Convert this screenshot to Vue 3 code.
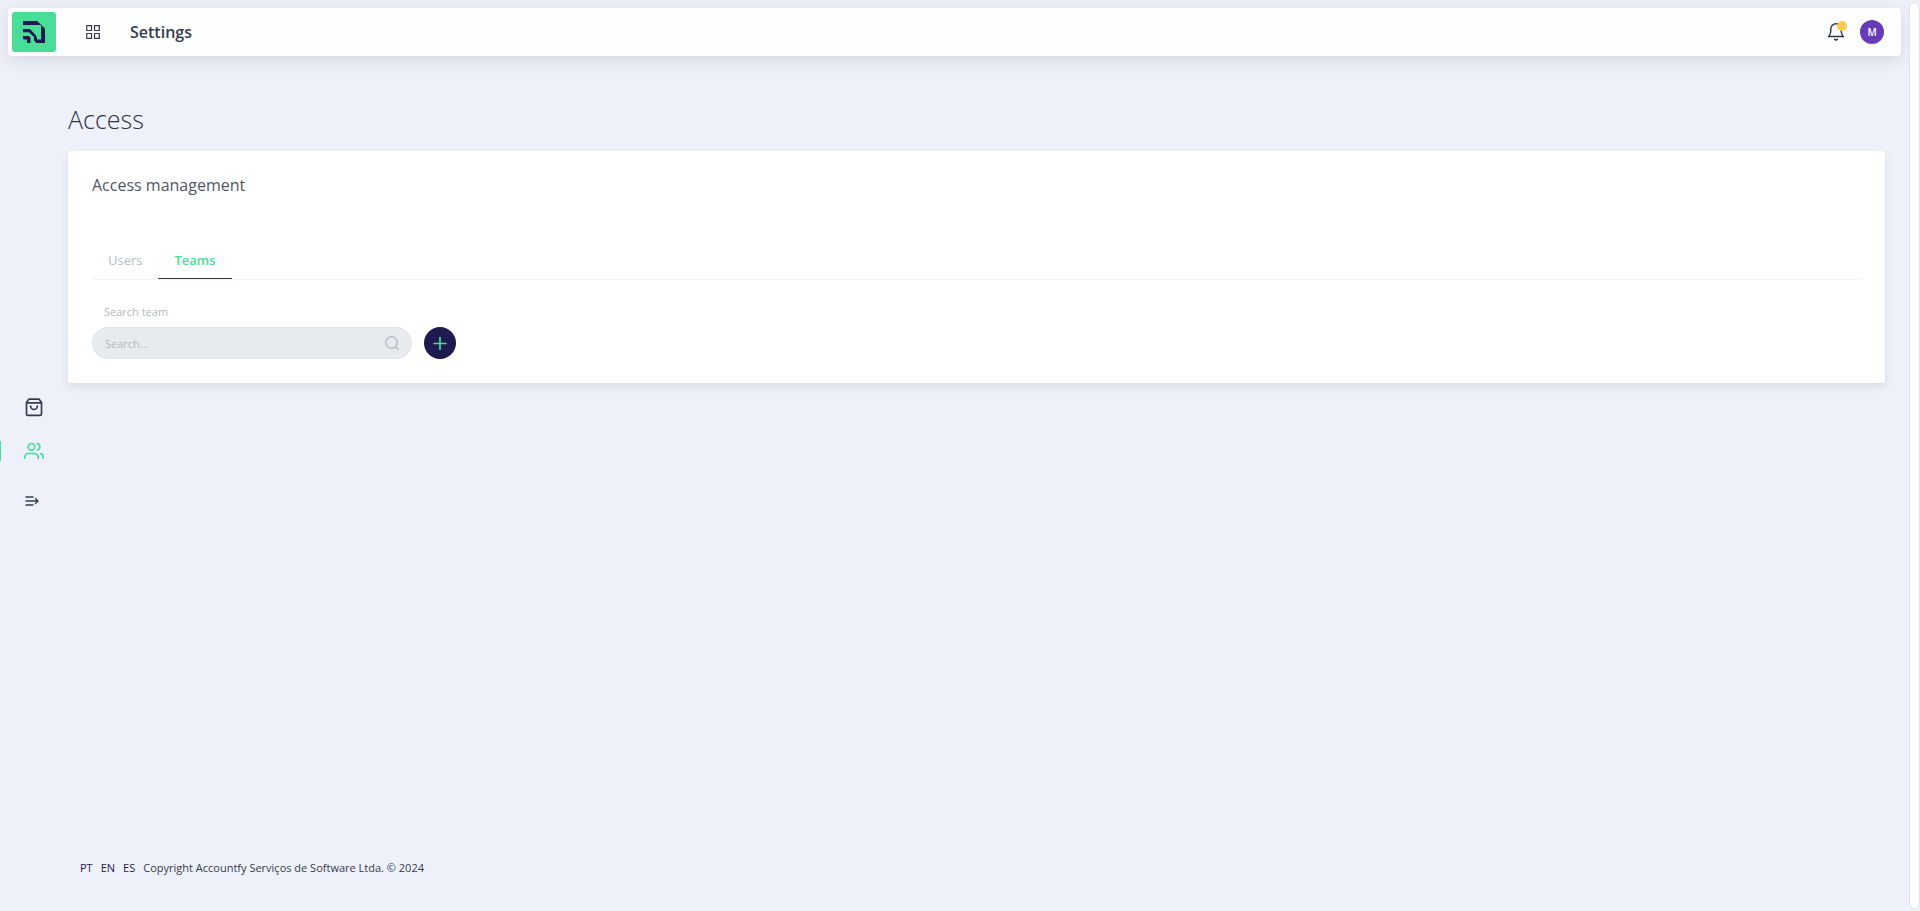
<template>
  <div class="page">
    <div class="layout">
      <header class="topbar">
        <a href="#" class="logo" aria-label="Accountfy">
          <svg viewBox="0 0 44 40" width="44" height="40" fill="#1f1a50">
            <path d="M11 9h14l4.500 4H11z" />
            <path d="M29 12.800l4 3.700V31h-8.500L22 28.500V22l3 3.500V27.500h4.200z" />
            <path d="M11 17h7l6 6.500v3.500l-7-6.800h-6z" />
            <path d="M11 24h6l1.500 1.500V31h-3.500v-3.500H12l-1-1z" />
          </svg>
        </a>
        <button type="button" class="icon-btn apps" aria-label="Apps">
          <svg viewBox="0 0 14 14" width="14" height="14" fill="none" stroke="#343b50" stroke-width="1.200">
            <path d="M.7.7h4.800v4.800H.7zM8.500.7h4.800v4.800H8.500zM.7 8.500h4.800v4.800H.7zM8.500 8.500h4.800v4.800H8.500z" />
          </svg>
        </button>
        <h1 class="topbar-title">Settings</h1>
        <div class="topbar-actions">
          <button type="button" class="icon-btn bell" aria-label="Notifications">
            <svg viewBox="0 0 18 20" width="18" height="20" fill="none" stroke="#2b3247" stroke-width="1.400" stroke-linecap="round" stroke-linejoin="round">
              <path d="M1.500 14.500c1.800-1.500 2.300-3.200 2.300-5.500V7a5.200 5.200 0 0 1 10.400 0v2c0 2.300.5 4 2.300 5.500z" />
              <path d="M7.500 17.300c.8 1 2.200 1 3 0" />
            </svg>
            <span class="badge"></span>
          </button>
          <button type="button" class="avatar">M</button>
        </div>
      </header>

      <div class="body">
        <nav class="sidebar">
          <a
            v-for="item in menu"
            :key="item.name"
            href="#"
            class="side-link"
            :class="{ active: item.name === current }"
            :aria-label="item.name"
            @click.prevent="current = item.name"
          >
            <svg viewBox="0 0 24 24" width="20" height="20" fill="none" stroke="currentColor" stroke-width="2" stroke-linecap="round" stroke-linejoin="round">
              <path v-for="d in item.paths" :key="d" :d="d" />
            </svg>
          </a>
          <button type="button" class="side-link expand" aria-label="Expand menu">
            <svg viewBox="0 0 14 12" width="14" height="12" fill="none" stroke="currentColor" stroke-width="1.300" stroke-linecap="round" stroke-linejoin="round">
              <path d="M1 2h7M1 6h12M1 10h7M10.500 3.500L13 6l-2.500 2.500" />
            </svg>
          </button>
        </nav>

        <div class="content">
          <main>
            <h2 class="page-title">Access</h2>
            <section class="card">
              <h3 class="card-title">Access management</h3>
              <div class="tabs" role="tablist">
                <button
                  v-for="tab in tabs"
                  :key="tab"
                  type="button"
                  role="tab"
                  class="tab"
                  :class="{ active: tab === activeTab }"
                  :aria-selected="tab === activeTab"
                  @click="activeTab = tab"
                >{{ tab }}</button>
              </div>
              <label for="search-team" class="search-label">Search team</label>
              <div class="search-row">
                <div class="search-box">
                  <input id="search-team" v-model="search" type="text" placeholder="Search..." />
                  <svg viewBox="0 0 14 14" width="14" height="14" fill="none" stroke="#b9bcc8" stroke-width="1.500" stroke-linecap="round">
                    <circle cx="6.500" cy="6.500" r="5.700" />
                    <path d="M10.700 10.700l2.500 2.500" />
                  </svg>
                </div>
                <button type="button" class="add-btn" aria-label="Add team">
                  <svg viewBox="0 0 14 14" width="14" height="14" fill="none" stroke="#48de98" stroke-width="1.700" stroke-linecap="round">
                    <path d="M7 1.500v12M1 7.500h12" />
                  </svg>
                </button>
              </div>
            </section>
          </main>

          <footer class="footer">
            <a v-for="lang in langs" :key="lang" href="#">{{ lang }}</a>
            <span>Copyright Accountfy Serviços de Software Ltda. © 2024</span>
          </footer>
        </div>
      </div>
    </div>
    <div class="scroll-track"></div>
  </div>
</template>

<script setup>
import { ref } from 'vue';

const tabs = ['Users', 'Teams'];
const activeTab = ref('Teams');
const search = ref('');
const langs = ['PT', 'EN', 'ES'];

const current = ref('Access');
const menu = [
  {
    name: 'Store',
    paths: [
      'M6 2.500h12l3 4V20a2 2 0 0 1-2 2H5a2 2 0 0 1-2-2V6.500z',
      'M3 7h18',
      'M16 11a4 4 0 0 1-8 0',
    ],
  },
  {
    name: 'Access',
    paths: [
      'M17 21v-2a4 4 0 0 0-4-4H5a4 4 0 0 0-4 4v2',
      'M9 3a4 4 0 1 0 0 8a4 4 0 1 0 0-8',
      'M23 21v-2a4 4 0 0 0-3-3.870',
      'M16 3.130a4 4 0 0 1 0 7.750',
    ],
  },
];
</script>

<style>
body {
  background: #eef1fa;
}
</style>

<style scoped>
.page {
  display: flex;
  min-height: 100vh;
  font-family: 'Open Sans', sans-serif;
  color: #343b50;
}

.page * {
  box-sizing: border-box;
}

button {
  padding: 0;
  border: 0;
  background: none;
  font-family: inherit;
  cursor: pointer;
}

svg {
  display: block;
}

.layout {
  flex: 1;
  display: flex;
  flex-direction: column;
}

/* Top bar */
.topbar {
  display: flex;
  align-items: center;
  height: 48px;
  margin: 8px 8px 0;
  padding: 0 17px 0 4px;
  border-radius: 4px;
  background: #fdfffe;
  box-shadow: 0 4px 16px rgba(40, 40, 40, 0.12);
}

.logo {
  border-radius: 3px;
  background: #48de98;
}

.apps {
  margin-left: 30px;
}

.topbar-title {
  margin: 0 0 0 30px;
  font-size: 16px;
  font-weight: 600;
  line-height: 24px;
}

.topbar-actions {
  display: flex;
  align-items: center;
  gap: 15px;
  margin-left: auto;
}

.bell {
  position: relative;
}

.badge {
  position: absolute;
  top: -1px;
  right: -2px;
  width: 10px;
  height: 10px;
  border-radius: 50%;
  background: #ffcb4f;
}

.avatar {
  width: 24px;
  height: 24px;
  border-radius: 50%;
  background: #673ab7;
  color: #fff;
  font-size: 10px;
  font-weight: 600;
}

/* Sidebar */
.body {
  flex: 1;
  display: flex;
}

.sidebar {
  display: flex;
  flex-direction: column;
  justify-content: center;
  width: 68px;
  padding-bottom: 59px;
}

.side-link {
  position: relative;
  display: flex;
  align-items: center;
  height: 44px;
  padding-left: 24px;
  color: #343b50;
}

.side-link.active {
  color: #48de98;
}

.side-link.active::before {
  content: '';
  position: absolute;
  left: 0;
  width: 1px;
  height: 20px;
  background: #48de98;
}

.expand {
  margin-top: 6px;
  padding-left: 25px;
}

/* Content */
.content {
  flex: 1;
  display: flex;
  flex-direction: column;
  padding: 43px 24px 33px 0;
}

.page-title {
  margin: 0;
  color: #2b3247;
  font-size: 25px;
  font-weight: 300;
  line-height: 40px;
}

.card {
  margin-top: 12px;
  padding: 24px;
  border-radius: 3px;
  background: #fff;
  box-shadow: 0 4px 8px rgba(40, 50, 60, 0.1);
}

.card-title {
  margin: 0 0 48px;
  color: #50566a;
  font-size: 16px;
  font-weight: 400;
  line-height: 20px;
}

.tabs {
  display: flex;
  border-bottom: 1px solid #f2f3f6;
}

.tab {
  height: 36px;
  padding: 0 16px 1px;
  border-bottom: 1px solid transparent;
  color: #b9bcc8;
  font-size: 13px;
}

.tab.active {
  border-bottom-color: #2b3950;
  color: #48de98;
  font-weight: 600;
}

.search-label {
  display: block;
  margin: 24px 0 7px 12px;
  color: #b4b7c4;
  font-size: 11px;
  line-height: 16px;
}

.search-row {
  display: flex;
  gap: 12px;
}

.search-box {
  display: flex;
  align-items: center;
  width: 320px;
  height: 32px;
  padding: 0 12px;
  border: 1px solid #dfe2ea;
  border-radius: 16px;
  background: #e8ebee;
}

.search-box input {
  flex: 1;
  min-width: 0;
  padding: 0;
  border: 0;
  outline: 0;
  background: none;
  color: #343b50;
  font-family: inherit;
  font-size: 11px;
}

.search-box input::placeholder {
  color: #b4b7c4;
}

.add-btn {
  display: flex;
  align-items: center;
  justify-content: center;
  width: 32px;
  height: 32px;
  border-radius: 50%;
  background: #1f1a50;
}

.footer {
  display: flex;
  gap: 8px;
  margin-top: auto;
  padding-left: 12px;
  font-size: 11px;
  line-height: 20px;
}

.footer a {
  color: #1f1a50;
  text-decoration: none;
}

.scroll-track {
  width: 11px;
  margin: 2px 0;
  border: 1px solid #dfe1e7;
  border-radius: 6px;
  background: #fff;
}
</style>
